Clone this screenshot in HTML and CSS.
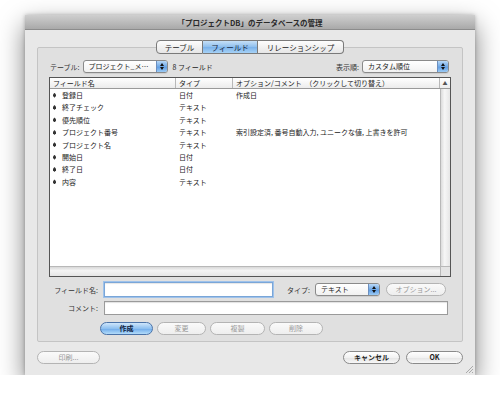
FILE: index.html
```html
<!DOCTYPE html>
<html lang="ja">
<head>
    <meta charset="UTF-8">
    <title>データベースの管理</title>
    <link rel="stylesheet" href="styles.css">
</head>
<body>
    <div class="window">
        <div class="titlebar">「プロジェクトDB」のデータベースの管理</div>

        <div class="content">
            <div class="tabs">
                <span class="tab">テーブル</span>
                <span class="tab active">フィールド</span>
                <span class="tab">リレーションシップ</span>
            </div>

            <div class="group">
                <div class="toolbar">
                    <span class="label">テーブル:</span>
                    <div class="popup table-popup"><span class="popup-text">プロジェクト_メ…</span><span class="popup-cap"></span></div>
                    <span class="count">8 フィールド</span>
                    <span class="spacer"></span>
                    <span class="label">表示順:</span>
                    <div class="popup order-popup"><span class="popup-text">カスタム順位</span><span class="popup-cap"></span></div>
                </div>

                <div class="list">
                    <div class="list-head">
                        <span>フィールド名</span>
                        <span>タイプ</span>
                        <span>オプション/コメント　（クリックして切り替え）</span>
                    </div>
                    <div class="corner-up">▲</div>
                    <div class="list-body">
                        <div class="row"><span class="name"><i class="handle"></i>登録日</span><span>日付</span><span>作成日</span></div>
                        <div class="row"><span class="name"><i class="handle"></i>終了チェック</span><span>テキスト</span><span></span></div>
                        <div class="row"><span class="name"><i class="handle"></i>優先順位</span><span>テキスト</span><span></span></div>
                        <div class="row"><span class="name"><i class="handle"></i>プロジェクト番号</span><span>テキスト</span><span>索引設定済, 番号自動入力, ユニークな値, 上書きを許可</span></div>
                        <div class="row"><span class="name"><i class="handle"></i>プロジェクト名</span><span>テキスト</span><span></span></div>
                        <div class="row"><span class="name"><i class="handle"></i>開始日</span><span>日付</span><span></span></div>
                        <div class="row"><span class="name"><i class="handle"></i>終了日</span><span>日付</span><span></span></div>
                        <div class="row"><span class="name"><i class="handle"></i>内容</span><span>テキスト</span><span></span></div>
                    </div>
                    <div class="vscroll"></div>
                    <div class="hscroll"></div>
                    <div class="corner"></div>
                </div>

                <div class="form-row field-row">
                    <span class="form-label">フィールド名:</span>
                    <div class="input name-input focused"></div>
                    <span class="label type-label">タイプ:</span>
                    <div class="popup type-popup"><span class="popup-text">テキスト</span><span class="popup-cap"></span></div>
                    <span class="btn disabled option-btn">オプション...</span>
                </div>

                <div class="form-row comment-row">
                    <span class="form-label">コメント:</span>
                    <div class="input comment-input"></div>
                </div>

                <div class="actions">
                    <span class="btn default create-btn">作成</span>
                    <span class="btn disabled change-btn">変更</span>
                    <span class="btn disabled copy-btn">複製</span>
                    <span class="btn disabled delete-btn">削除</span>
                </div>
            </div>

            <div class="bottom-bar">
                <span class="btn disabled print-btn">印刷...</span>
                <span class="spacer"></span>
                <span class="btn cancel-btn">キャンセル</span>
                <span class="btn ok-btn">OK</span>
            </div>
        </div>

        <svg class="grip" width="9" height="9" viewBox="0 0 9 9">
            <path d="M8 1 L1 8 M8 4 L4 8 M8 7 L7 8" stroke="#999" stroke-width="0.8"/>
        </svg>
    </div>
</body>
</html>
```

FILE: styles.css
```css
body {
    margin: 0;
    background: #fff;
    font-family: "Noto Sans CJK JP", "DejaVu Sans", sans-serif;
    font-size: 7px;
    color: #222;
}

.window {
    position: relative;
    width: 450px;
    height: 360px;
    margin: 15px 0 0 25px;
    background: #e8e8e8;
    box-shadow: 0 10px 24px rgba(0, 0, 0, 0.5), 0 0 4px rgba(0, 0, 0, 0.25);
    display: flex;
    flex-direction: column;
}

.titlebar {
    height: 15px;
    line-height: 15px;
    text-align: center;
    font-size: 7.5px;
    font-weight: bold;
    color: #2a2a2a;
    background: linear-gradient(#cfcfcf, #a9a9a9);
    border-bottom: 1px solid #8c8c8c;
    box-sizing: border-box;
}

.content {
    flex: 1;
    padding: 10px 12px 0;
    display: flex;
    flex-direction: column;
}

/* タブ */
.tabs {
    display: flex;
    justify-content: center;
    margin-bottom: -7px;
    position: relative;
    z-index: 1;
    height: 14px;
}

.tab {
    height: 14px;
    line-height: 13px;
    box-sizing: border-box;
    border: 1px solid #7a7a7a;
    border-left: none;
    background: linear-gradient(#fdfdfd, #e6e6e6);
    font-size: 7.5px;
    color: #222;
    text-align: center;
    white-space: nowrap;
}

.tab:first-child {
    border-left: 1px solid #7a7a7a;
    border-radius: 4px 0 0 4px;
    width: 47px;
}

.tab:last-child {
    border-radius: 0 4px 4px 0;
    width: 86px;
}

.tab.active {
    width: 55px;
    background: linear-gradient(#c6e0f7, #8ebfee 50%, #79b1ea 51%, #a7d2f6);
    color: #1a2a44;
}

/* グループ */
.group {
    border: 1px solid #c4c4c4;
    background: #e0e0e0;
    border-radius: 2px;
    padding: 12px 11px 6px 11px;
    display: flex;
    flex-direction: column;
}

.toolbar {
    display: flex;
    align-items: center;
    height: 13px;
    padding-left: 1px;
    white-space: nowrap;
}

.label {
    color: #333;
    margin-right: 3px;
    white-space: nowrap;
}

.spacer {
    flex: 1;
}

.count {
    margin-left: 5px;
}

.popup {
    height: 13px;
    box-sizing: border-box;
    border: 1px solid #8a8a8a;
    border-radius: 3px;
    background: linear-gradient(#fff, #f1f1f1);
    display: flex;
    overflow: hidden;
    flex-shrink: 0;
    box-shadow: 0 1px 0 rgba(0, 0, 0, 0.08);
}

.popup-text {
    flex: 1;
    padding-left: 5px;
    line-height: 11px;
    white-space: nowrap;
}

.popup-cap {
    width: 10px;
    border-left: 1px solid #6c8fbf;
    background: linear-gradient(#b9d9f8, #6fa8e6 50%, #5c9ae2 51%, #9ccbf5);
    position: relative;
}

.popup-cap::before,
.popup-cap::after {
    content: "";
    position: absolute;
    left: 3px;
    border-left: 2px solid transparent;
    border-right: 2px solid transparent;
}

.popup-cap::before {
    top: 2px;
    border-bottom: 3px solid #111;
}

.popup-cap::after {
    bottom: 2px;
    border-top: 3px solid #111;
}

.table-popup {
    width: 85px;
}

.order-popup {
    width: 87px;
    margin-right: 2px;
}

/* リスト */
.list {
    margin-top: 4px;
    height: 200px;
    box-sizing: border-box;
    border: 1px solid #555;
    background: #fff;
    display: grid;
    grid-template-columns: 1fr 10px;
    grid-template-rows: 11px 1fr 10px;
}

.list-head {
    display: grid;
    grid-template-columns: 126px 57px 1fr;
    background: linear-gradient(#ffffff, #ececec);
    border-bottom: 1px solid #9a9a9a;
    line-height: 10px;
    white-space: nowrap;
}

.list-head span {
    padding-left: 3px;
    border-right: 1px solid #b8b8b8;
}

.corner-up {
    font-size: 5px;
    text-align: center;
    line-height: 10px;
    color: #555;
    background: linear-gradient(#ffffff, #ececec);
    border-bottom: 1px solid #9a9a9a;
}

.row {
    display: grid;
    grid-template-columns: 126px 57px 1fr;
    height: 12.4px;
    line-height: 12.4px;
}

.row span {
    padding-left: 3px;
    white-space: nowrap;
}

.row .name {
    display: flex;
    align-items: center;
}

.handle {
    width: 3px;
    height: 5px;
    margin-right: 6px;
    background: #333;
    clip-path: polygon(50% 0, 100% 35%, 100% 65%, 50% 100%, 0 65%, 0 35%);
}

.vscroll {
    border-left: 1px solid #b8b8b8;
    background: linear-gradient(90deg, #dcdcdc, #f6f6f6 40%, #e6e6e6);
}

.hscroll {
    border-top: 1px solid #b8b8b8;
    background: linear-gradient(#d8d8d8, #f4f4f4 40%, #e6e6e6);
}

.corner {
    background: #e4e4e4;
    border-left: 1px solid #b8b8b8;
    border-top: 1px solid #b8b8b8;
}

/* フォーム */
.form-row {
    display: flex;
    align-items: center;
}

.form-label {
    width: 49px;
    text-align: right;
    margin-right: 6px;
    color: #333;
    white-space: nowrap;
}

.field-row {
    margin-top: 5px;
    height: 15px;
}

.comment-row {
    margin-top: 4px;
    height: 14px;
}

.input {
    height: 100%;
    box-sizing: border-box;
    border: 1px solid #9a9a9a;
    background: #fff;
    box-shadow: inset 0 1px 1px rgba(0, 0, 0, 0.12);
}

.name-input {
    width: 169px;
}

.focused {
    border-color: #7aa6d8;
    box-shadow: 0 0 0 1px #9fc2ea, inset 0 1px 1px rgba(0, 0, 0, 0.1);
}

.type-label {
    margin-left: 14px;
    margin-right: 5px;
}

.type-popup {
    width: 65px;
}

.comment-input {
    width: 344px;
}

/* ボタン */
.btn {
    height: 13px;
    line-height: 11px;
    box-sizing: border-box;
    border: 1px solid #8a8a8a;
    border-radius: 7px;
    background: linear-gradient(#ffffff, #f2f2f2 50%, #e4e4e4 51%, #f7f7f7);
    text-align: center;
    color: #222;
    white-space: nowrap;
}

.btn.disabled {
    color: #999;
    border-color: #b4b4b4;
    background: linear-gradient(#fafafa, #eeeeee);
}

.btn.default {
    border-color: #4b73a8;
    background: linear-gradient(#cfe6fb, #8ec0f0 50%, #6eaaea 51%, #b3dcfa);
    color: #10223f;
    font-weight: bold;
}

.option-btn {
    width: 60px;
    margin-left: 6px;
}

.actions {
    display: flex;
    gap: 4px;
    margin-top: 7px;
    padding-left: 51px;
}

.create-btn { width: 53px; }
.change-btn { width: 49px; }
.copy-btn { width: 55px; }
.delete-btn { width: 54px; }

.bottom-bar {
    display: flex;
    gap: 6px;
    margin-top: 9px;
}

.print-btn { width: 63px; }
.cancel-btn { width: 57px; font-weight: bold; }
.ok-btn { width: 57px; font-weight: bold; }

.grip {
    position: absolute;
    right: 1px;
    bottom: 1px;
}
```
